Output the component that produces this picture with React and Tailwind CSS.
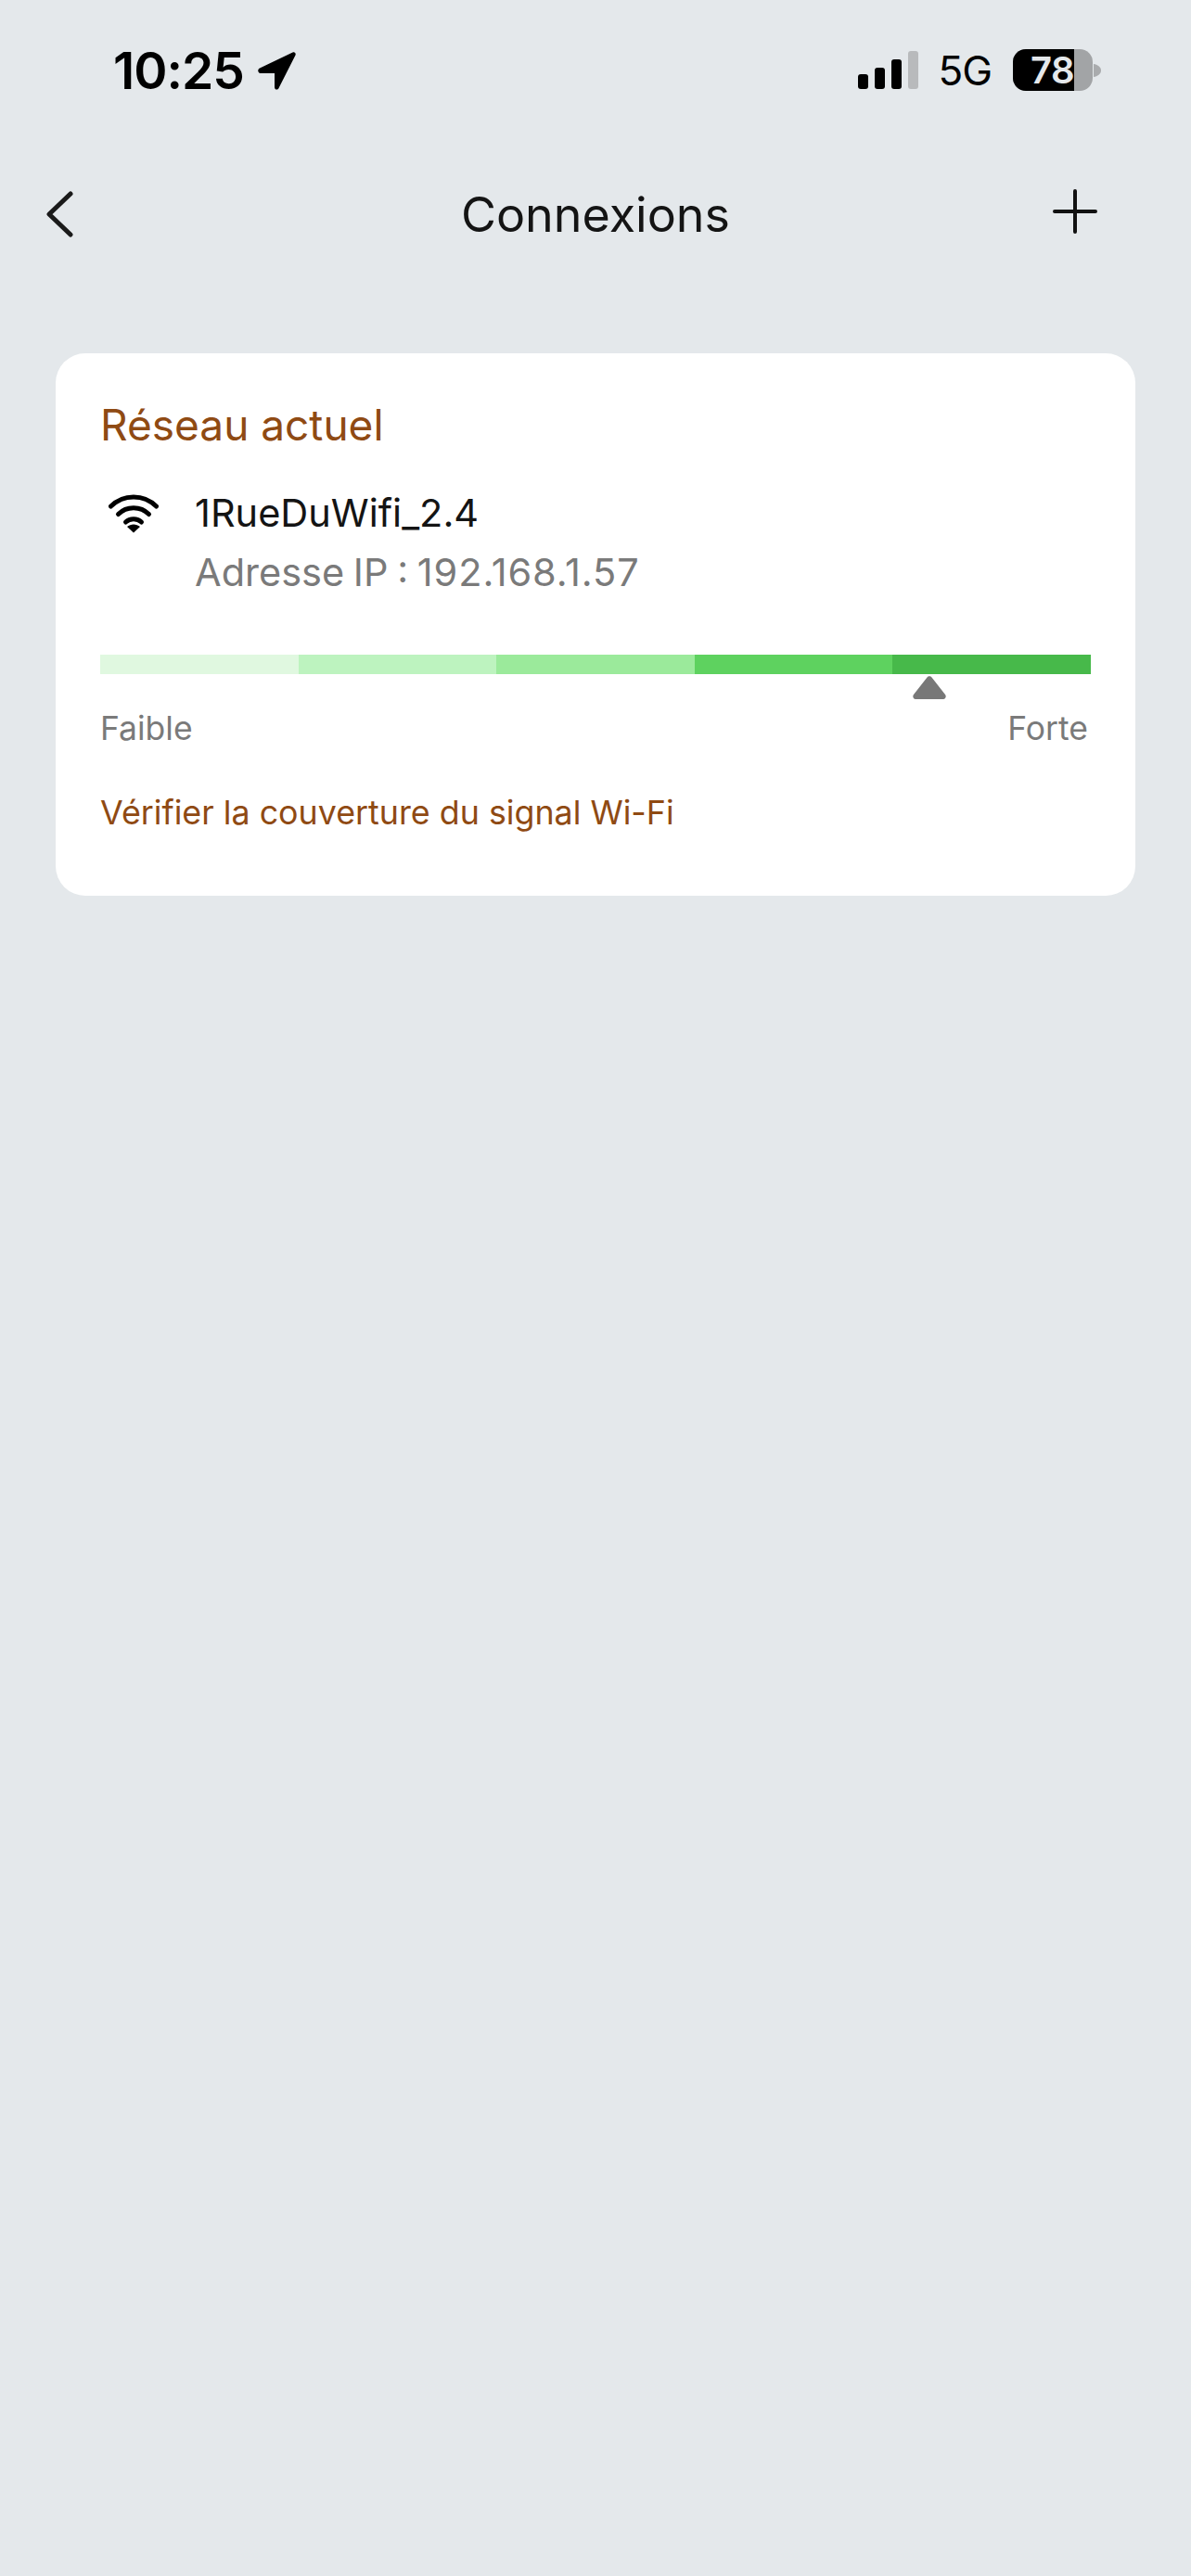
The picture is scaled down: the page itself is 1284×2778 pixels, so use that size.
import React from 'react';

const signalSegments = ['bg-[#e0f8e0]', 'bg-[#bdf3bf]', 'bg-[#9bea9b]', 'bg-[#5ed25f]', 'bg-[#47b94a]'];

function SignalBars() {
    return (
        <div className="flex items-end gap-[7px] h-[41px]">
            <div className="w-[11px] h-[16px] rounded-[3px] bg-black" />
            <div className="w-[11px] h-[23px] rounded-[3px] bg-black" />
            <div className="w-[11px] h-[32px] rounded-[3px] bg-black" />
            <div className="w-[11px] h-[41px] rounded-[3px] bg-[#b8babc]" />
        </div>
    );
}

function Battery() {
    return (
        <div className="flex items-center">
            <div className="flex w-[86px] h-[45px] rounded-[14px] bg-[#a2a4a6]">
                <div className="flex w-[66px] items-center justify-end rounded-l-[14px] bg-black">
                    <span className="text-[40px] leading-none font-semibold tracking-[-0.5px] text-[#e4e8eb]">78</span>
                </div>
            </div>
            <svg width="8" height="14" viewBox="0 0 8 14" className="ml-[1px]">
                <path d="M0 0c4 .5 8 3 8 7s-4 6.500-8 7z" fill="#a9abad" />
            </svg>
        </div>
    );
}

function WifiIcon() {
    return (
        <svg width="54" height="42" viewBox="0 0 54 42" fill="none" stroke="#000" strokeWidth="5" strokeLinecap="round">
            <path d="M2.500 13C16 -.5 38 -.5 51.500 13" />
            <path d="M10.500 21.500C19.500 12.500 34.500 12.500 43.500 21.500" />
            <path d="M18.500 30C23 25.500 31 25.500 35.500 30" />
            <path d="M27 41.500l-7-6.500c4-3.500 10-3.500 14 0z" fill="#000" stroke="none" />
        </svg>
    );
}

export default function App() {
    return (
        <div className="w-full min-h-screen bg-[#e4e8eb] font-['Inter',sans-serif]">
            {/* status bar */}
            <div className="flex items-center justify-between pt-[53px] pl-[122px] pr-[97px] h-[98px]">
                <div className="flex items-center gap-[14px]">
                    <span className="pt-[2px] text-[55px] leading-none font-semibold tracking-[-1px] text-black">10:25</span>
                    <svg width="43" height="42" viewBox="0 0 43 42">
                        <path d="M38.500 1.500L3 18.500c-3 1.500-2 5.500 1.500 5.500H19v15c0 3 3.500 3.500 4.500 1L41.500 4.500c.8-2.200-1-4-3-3z" fill="#000" />
                    </svg>
                </div>
                <div className="flex items-center">
                    <SignalBars />
                    <span className="ml-[21px] text-[44px] leading-none text-black tracking-[-1px]">5G</span>
                    <div className="ml-[23px]">
                        <Battery />
                    </div>
                </div>
            </div>

            {/* nav bar */}
            <div className="grid grid-cols-[1fr_auto_1fr] items-center mt-[106px] px-[50px] h-[52px]">
                <svg width="30" height="50" viewBox="0 0 30 50" fill="none" stroke="#1a1a1a" strokeWidth="5" strokeLinecap="round" strokeLinejoin="round">
                    <path d="M26 3L3 25l23 22" />
                </svg>
                <span className="mt-[2px] text-[52px] leading-none text-[#141414]">Connexions</span>
                <svg width="48" height="48" viewBox="0 0 48 48" fill="none" stroke="#111" strokeWidth="4" strokeLinecap="round" className="justify-self-end self-start mr-[51px]">
                    <path d="M24 2v44M2 24h44" />
                </svg>
            </div>

            {/* current network card */}
            <div className="mx-[60px] mt-[125px] h-[585px] rounded-[32px] bg-white pt-[54px] pl-[48px] pr-[48px]">
                <div className="text-[46px] leading-none text-[#8f4a13]">Réseau actuel</div>

                <div className="flex items-start mt-[52px] pl-[9px]">
                    <WifiIcon />
                    <div className="ml-[39px]">
                        <div className="text-[41.500px] leading-none text-[#141414]">1RueDuWifi_2.4</div>
                        <div className="mt-[22px] text-[41.500px] leading-none [word-spacing:-2px] text-[#7a7a7a]">
                            Adresse IP : <span className="tracking-[0.9px]">192.168.1.57</span>
                        </div>
                    </div>
                </div>

                <div className="mt-[68px]">
                    <div className="flex h-[21px]">
                        {signalSegments.map((color) => (
                            <div key={color} className={`flex-1 ${color}`} />
                        ))}
                    </div>
                    <div className="flex justify-end pr-[156px] mt-[2px]">
                        <svg width="36" height="25" viewBox="0 0 36 25">
                            <path d="M15.500 1.500c1.200-1.800 3.800-1.800 5 0l14.500 18.500c1.500 2 .5 5-2 5H3c-2.500 0-3.500-3-2-5z" fill="#787878" />
                        </svg>
                    </div>
                    <div className="flex justify-between mt-[14px] pr-[3px] text-[35.500px] leading-none text-[#7a7a7a]">
                        <span>Faible</span>
                        <span>Forte</span>
                    </div>
                </div>

                <div className="mt-[55px] text-[35.800px] leading-none text-[#8f4a13]">Vérifier la couverture du signal Wi-Fi</div>
            </div>
        </div>
    );
}
